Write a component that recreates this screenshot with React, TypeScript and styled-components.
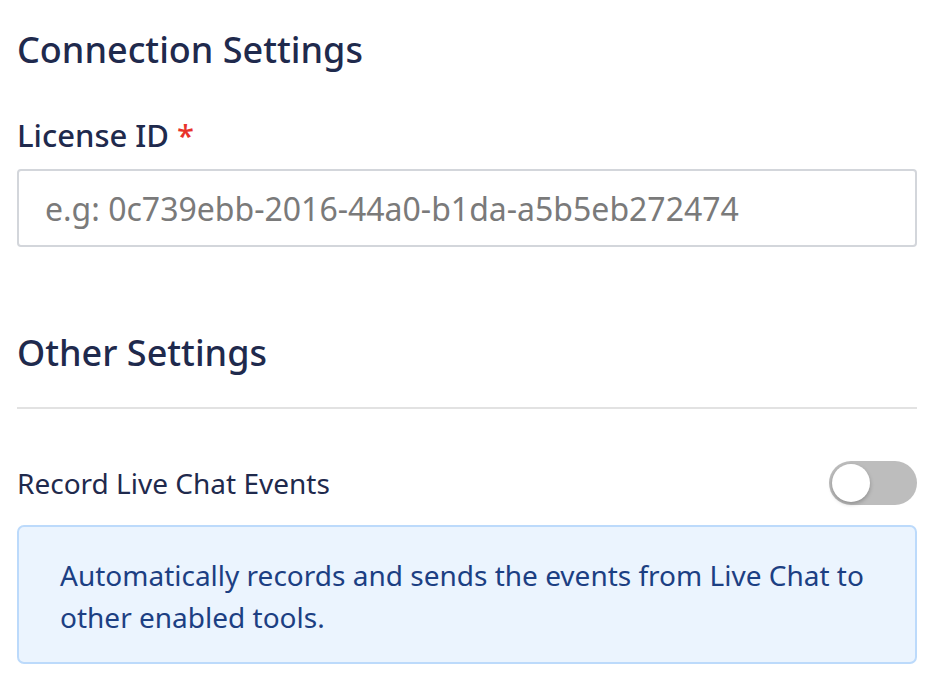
import React, { useState } from "react";
import styled, { createGlobalStyle } from "styled-components";

const GlobalStyle = createGlobalStyle`
  html, body {
    margin: 0;
    padding: 0;
    background: #ffffff;
  }
  body {
    font-family: "Noto Sans", "Open Sans", sans-serif;
    color: #1f2a4d;
  }
  * {
    box-sizing: border-box;
  }
`;

const Page = styled.div`
  padding: 25px 21px 0 17px;
  width: 938px;
`;

const SectionTitle = styled.h2`
  margin: 0;
  font-size: 36px;
  font-weight: 500;
  line-height: 50px;
  color: #1f2a4d;
`;

const Field = styled.div`
  display: flex;
  flex-direction: column;
  margin-top: 40px;
  margin-bottom: 81px;
`;

const Label = styled.label`
  font-size: 31px;
  font-weight: 500;
  line-height: 40px;
  color: #1f2a4d;
  margin-bottom: 14px;

  > span {
    color: #e8332a;
    margin-left: 8px;
  }
`;

const TextInput = styled.input`
  width: 100%;
  height: 78px;
  border: 2px solid #d3d6db;
  border-radius: 4px;
  padding: 0 26px;
  font-family: "Noto Sans", "Open Sans", sans-serif;
  font-size: 32px;
  color: #1f2a4d;
  outline: none;

  &::placeholder {
    color: #7a7a7a;
  }
`;

const Divider = styled.hr`
  border: none;
  height: 2px;
  background: #e2e2e2;
  margin: 29px 0 42px;
`;

const ToggleRow = styled.div`
  display: flex;
  align-items: center;
  justify-content: space-between;
  height: 64px;
`;

const ToggleLabel = styled.span`
  font-size: 28px;
  color: #1f2a4d;
`;

const Track = styled.button<{ $on: boolean }>`
  position: relative;
  width: 88px;
  height: 44px;
  border: none;
  border-radius: 22px;
  padding: 0;
  background: ${({ $on }) => ($on ? "#3a7bd5" : "#bdbdbd")};
  cursor: pointer;
`;

const Knob = styled.span<{ $on: boolean }>`
  position: absolute;
  top: 3px;
  left: ${({ $on }) => ($on ? "47px" : "3px")};
  width: 38px;
  height: 38px;
  border-radius: 50%;
  background: #ffffff;
  box-shadow: 0 2px 4px rgba(0, 0, 0, 0.25);
`;

const InfoBox = styled.div`
  margin-top: 10px;
  background: #ebf4fe;
  border: 2px solid #bcdafb;
  border-radius: 7px;
  padding: 27px 40px 24px 41px;
  font-size: 28px;
  line-height: 42px;
  color: #1c3f83;
`;

export default function App() {
  const [on, setOn] = useState(false);
  return (
    <Page>
      <GlobalStyle />
      <SectionTitle>Connection Settings</SectionTitle>
      <Field>
        <Label>
          License ID<span>*</span>
        </Label>
        <TextInput placeholder="e.g: 0c739ebb-2016-44a0-b1da-a5b5eb272474" />
      </Field>
      <SectionTitle>Other Settings</SectionTitle>
      <Divider />
      <ToggleRow>
        <ToggleLabel>Record Live Chat Events</ToggleLabel>
        <Track $on={on} onClick={() => setOn(!on)}>
          <Knob $on={on} />
        </Track>
      </ToggleRow>
      <InfoBox>
        Automatically records and sends the events from Live Chat to other enabled tools.
      </InfoBox>
    </Page>
  );
}
